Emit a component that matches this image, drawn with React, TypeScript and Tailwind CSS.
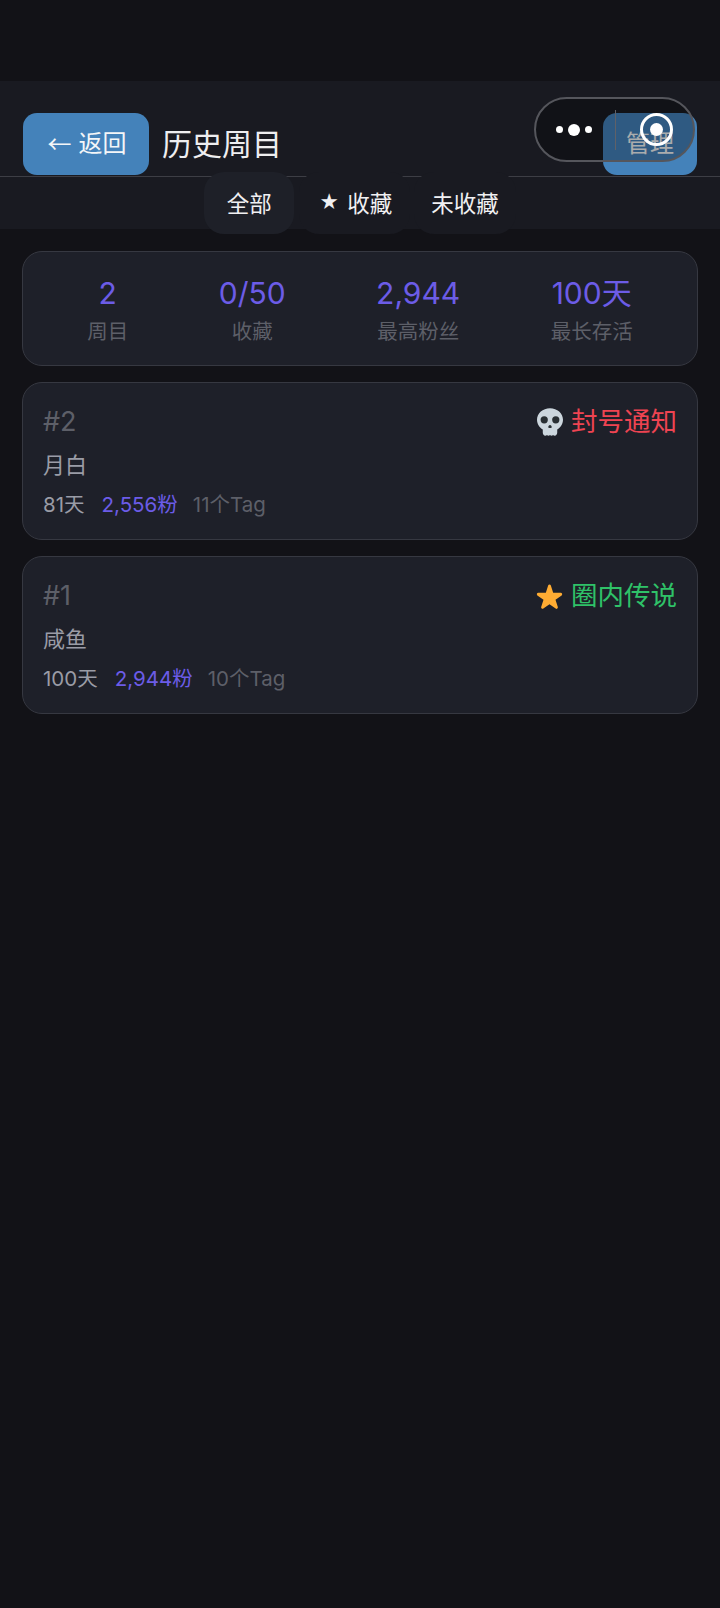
const fontStack = "font-['Inter','Noto_Sans_CJK_SC',sans-serif]";

function SkullIcon() {
  return (
    <svg width="26" height="28" viewBox="0 0 36 38">
      <path fill="#CCD6DD" d="M18 0C8 0 0 7 0 16c0 6 3.500 11 8 13.500V34c0 2 1.500 4 3.500 4 1 0 1.800-.4 2.300-1 .5.600 1.300 1 2.100 1s1.600-.4 2.100-1c.5.600 1.300 1 2.100 1s1.600-.4 2.100-1c.5.600 1.300 1 2.300 1 2 0 3.500-2 3.500-4v-4.500c4.500-2.500 8-7.500 8-13.500C36 7 28 0 18 0z" />
      <circle fill="#292F33" cx="10" cy="16" r="5" />
      <circle fill="#292F33" cx="26" cy="16" r="5" />
      <path fill="#292F33" d="M18 23c1.300 0 2.500 2 2.500 3.200 0 .8-1 1-2.500 1s-2.500-.2-2.500-1C15.500 25 16.700 23 18 23z" />
    </svg>
  );
}

function StarIcon() {
  return (
    <svg width="27" height="27" viewBox="0 0 36 36">
      <path fill="#FFAC33" d="M27.300 34.500c-.4 0-.8-.1-1.100-.4L18 28.200l-8.200 5.900c-.7.500-1.600.5-2.200 0-.7-.5-.9-1.300-.7-2.100l3.100-9.600-8.200-5.900c-.6-.5-.9-1.400-.6-2.100.3-.8 1-1.300 1.800-1.300h10.100L16.200 3.400c.3-.8 1-1.300 1.800-1.300s1.500.5 1.800 1.300l3.100 9.700h10.100c.8 0 1.500.5 1.800 1.300.3.700 0 1.600-.6 2.100l-8.200 5.900 3.100 9.600c.2.800 0 1.600-.7 2.100-.3.300-.7.400-1.100.4z" />
    </svg>
  );
}

const stats = [
  { value: "2", label: "周目" },
  { value: "0/50", label: "收藏" },
  { value: "2,944", label: "最高粉丝" },
  { value: "100天", label: "最长存活" },
];

const runs = [
  { id: "#2", name: "月白", days: "81天", fans: "2,556粉", tags: "11个Tag", icon: <SkullIcon />, ending: "封号通知", color: "text-[#ef4452]" },
  { id: "#1", name: "咸鱼", days: "100天", fans: "2,944粉", tags: "10个Tag", icon: <StarIcon />, ending: "圈内传说", color: "text-[#2fc268]" },
];

export default function App() {
  return (
    <div className={`relative min-h-[1608px] bg-[#121217] pt-[81px] ${fontStack}`}>
      <div className="h-[148px] bg-[#191a21]">
        <div className="pt-[32px] pb-[1px] border-b border-[#3d3e45]">
          <div className="flex h-[62px] items-center justify-between pl-[23px] pr-[23px]">
            <div className="flex items-center gap-[13px]">
              <button className="flex h-[62px] w-[126px] items-center justify-center gap-[7px] rounded-[14px] bg-[#4482ba] pl-[2px] text-[24px] text-[#f4f6f8]">
                <span className="mb-[3px] font-['Noto_Sans_CJK_SC',sans-serif]">←</span>
                <span>返回</span>
              </button>
              <h1 className="text-[30px] font-normal text-[#eeeef0]">历史周目</h1>
            </div>
            <button className="h-[62px] w-[94px] rounded-[14px] bg-[#4482ba] text-[24px] text-[#f4f6f8]">管理</button>
          </div>
        </div>
        <div className="relative -mt-[5px] flex justify-center gap-[4px] text-[22.5px] text-[#f0f0f2]">
          <div className="mr-[1px] flex h-[62px] items-center rounded-[20px] bg-[#1e2028] px-[22.5px] pt-[1px]">全部</div>
          <div className="flex h-[62px] items-center gap-[8px] rounded-[20px] bg-[#191a21] pl-[20px] pr-[18px] pt-[1px]">
            <span className="w-[20px] text-center text-[19px]">★</span>
            <span>收藏</span>
          </div>
          <div className="flex h-[62px] items-center rounded-[20px] bg-[#191a21] px-[17px] pt-[1px]">未收藏</div>
        </div>
      </div>

      <div className="flex flex-col gap-[16px] px-[22px] pt-[22px]">
        <div className="flex h-[115px] items-center justify-around rounded-[20px] border border-[#363841] bg-[#1e2029] px-[19px] pt-[3px]">
          {stats.map((s) => (
            <div key={s.label} className="flex flex-col items-center">
              <div className="text-[30px] leading-[38px] text-[#6c5ce7]">{s.value}</div>
              <div className="mt-[5px] text-[20.5px] leading-[30px] text-[#5d5f68]">{s.label}</div>
            </div>
          ))}
        </div>

        {runs.map((r) => (
          <div key={r.id} className="flex h-[158px] flex-col rounded-[20px] border border-[#363841] bg-[#1e2029] px-[20px] pt-[19px]">
            <div className="flex h-[38px] items-center justify-between">
              <span className="mt-[3px] text-[27px] text-[#5d5f68]">{r.id}</span>
              <span className={`mt-[2px] flex items-center gap-[8px] text-[26.5px] ${r.color}`}>
                {r.icon}
                {r.ending}
              </span>
            </div>
            <div className="mt-[9px] text-[22px] leading-[32px] text-[#9a9ca6]">{r.name}</div>
            <div className="mt-[9px] flex gap-[17px] text-[20.5px] leading-[30px]">
              <span className="text-[#9a9ca6]">{r.days}</span>
              <span className="text-[#6c5ce7]">{r.fans}</span>
              <span className="-ml-[2px] text-[#5d5f68]">{r.tags}</span>
            </div>
          </div>
        ))}
      </div>

      <div className="absolute left-[534px] top-[97px] flex h-[65px] w-[161px] items-center rounded-full border-2 border-[#55565c] bg-black/30">
        <div className="flex w-[56px] items-center justify-end gap-[5px]">
          <span className="h-[7px] w-[7px] rounded-full bg-white" />
          <span className="h-[12px] w-[12px] rounded-full bg-white" />
          <span className="h-[7px] w-[7px] rounded-full bg-white" />
        </div>
        <div className="ml-[23px] h-[40px] w-px bg-[#606168]" />
        <div className="ml-[24px] flex h-[33px] w-[33px] items-center justify-center rounded-full border-[3px] border-white">
          <span className="h-[13px] w-[13px] rounded-full bg-white" />
        </div>
      </div>
    </div>
  );
}
